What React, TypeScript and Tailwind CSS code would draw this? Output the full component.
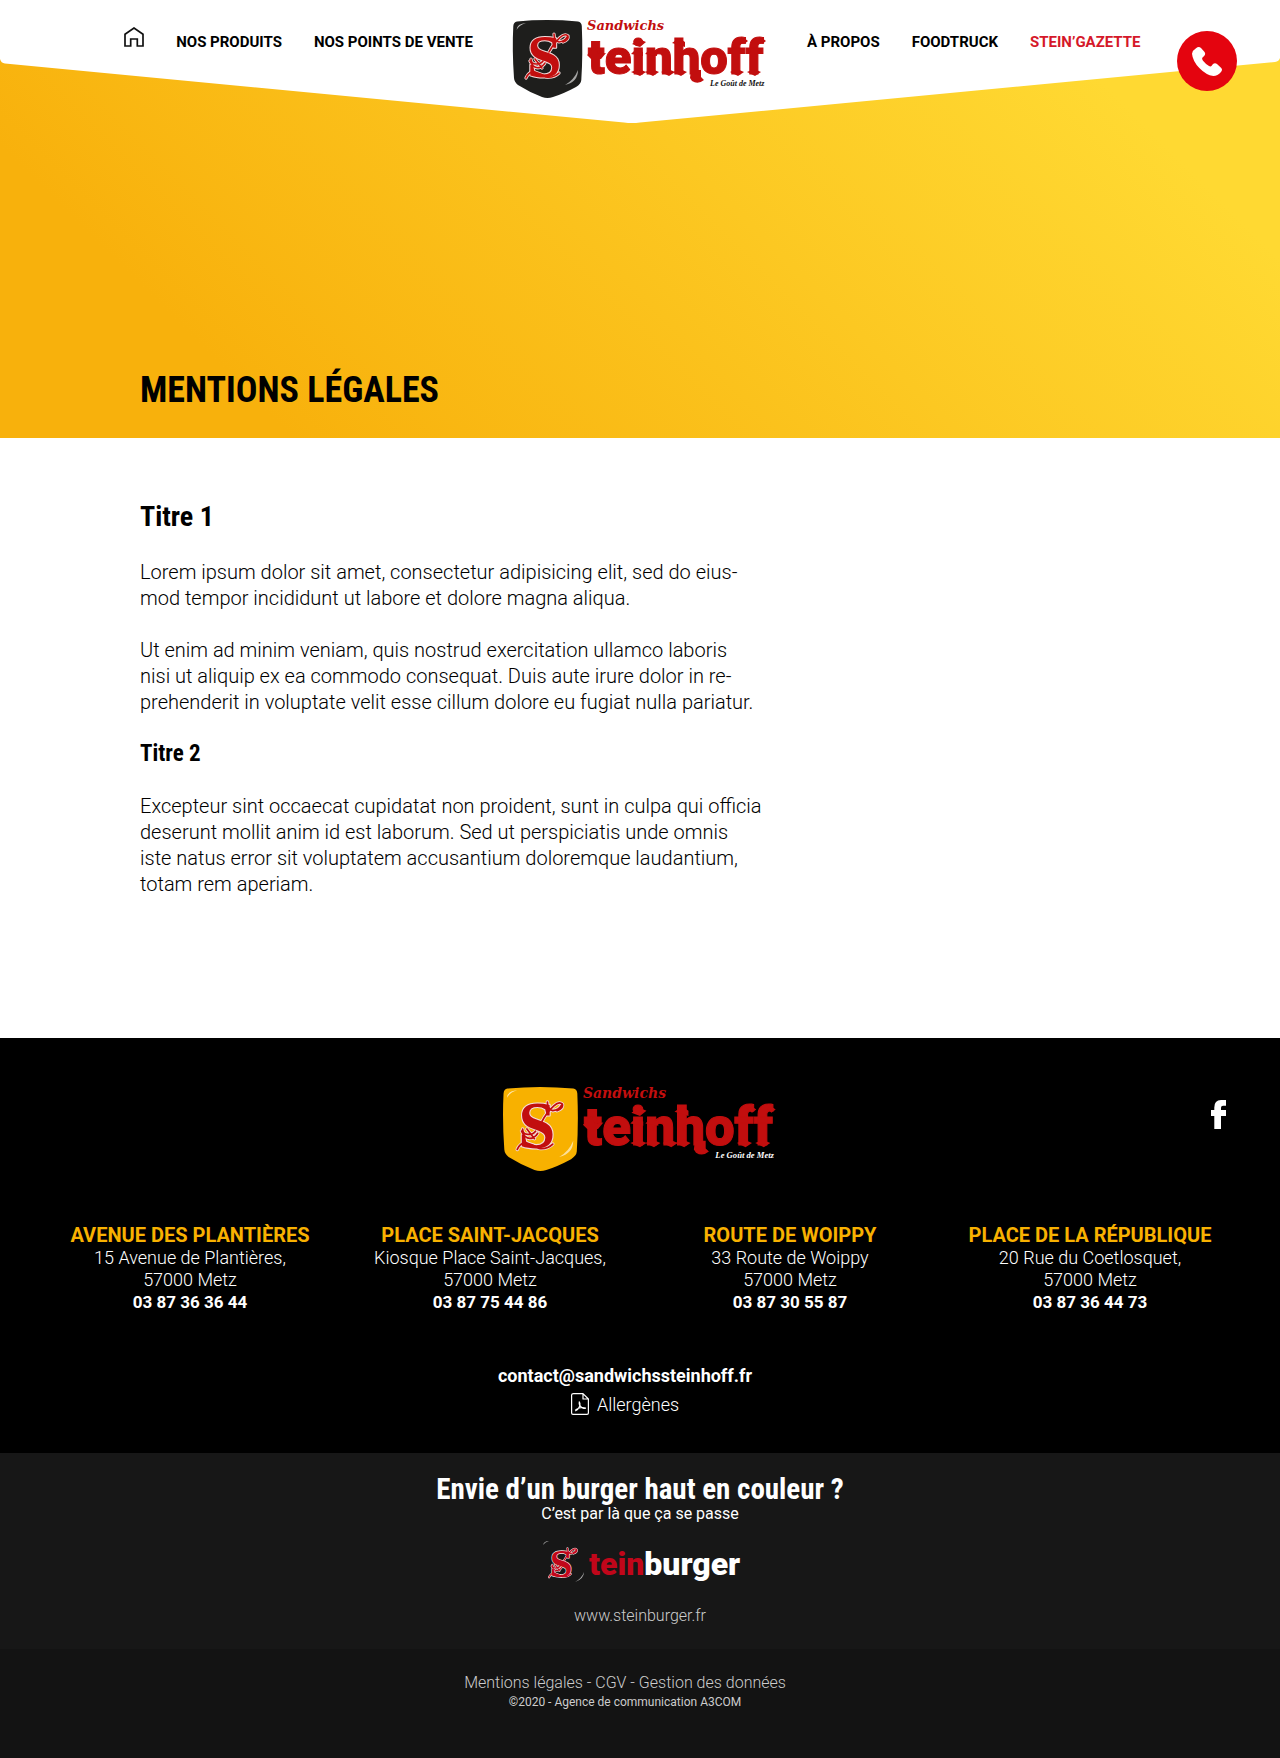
import type { ReactNode } from "react";

const shops = [
  { name: "AVENUE DES PLANTIÈRES", street: "15 Avenue de Plantières,", city: "57000 Metz", phone: "03 87 36 36 44" },
  { name: "PLACE SAINT-JACQUES", street: "Kiosque Place Saint-Jacques,", city: "57000 Metz", phone: "03 87 75 44 86" },
  { name: "ROUTE DE WOIPPY", street: "33 Route de Woippy", city: "57000 Metz", phone: "03 87 30 55 87" },
  { name: "PLACE DE LA RÉPUBLIQUE", street: "20 Rue du Coetlosquet,", city: "57000 Metz", phone: "03 87 36 44 73" },
];

/* Scrolls that surround the initial of the monogram. */
const scrolls =
  "M28 2Q28 9 33 10Q39 9 41 5M23 20Q27 12 34 5.500Q39 1 42 4Q43 8 37 10M5 27Q5 32 10 32Q15 32 17 29M4 29Q8 38 15 35Q18 33 19 31M9 27L16 36M0 46Q3 39 9 40Q16 42 20 45Q28 46 33 41";

/* Gothic monogram with its scrolls, on a 42x47 box. */
function Monogram({ red }: { red: string }) {
  return (
    <g strokeLinejoin="round" strokeLinecap="round">
      <path d={scrolls} fill="none" stroke="#f3dcdc" strokeWidth="3.200" />
      <text
        x="1"
        y="45"
        fontSize="62"
        fontWeight="700"
        fill={red}
        stroke="#f3dcdc"
        strokeWidth="2"
        paintOrder="stroke"
        className="font-['Liberation_Serif',serif]"
      >
        S
      </text>
      <path d={scrolls} fill="none" stroke={red} strokeWidth="1.600" />
    </g>
  );
}

/* Pointed blackletter terminals set over the wordmark's stems. */
const terminals =
  "M74 35l8-8 3 7 8-1-5 6H78ZM119 24l7-5 7 3-6 5ZM118 34l5-5 7 3v4ZM118 52l8-3 7 3-6 4ZM132 34l5-5 7 3v4ZM132 52l7-3 7 3-6 4ZM148 52l7-3 7 3-6 4ZM159 23l7-5 6 4v5ZM160 52l7-3 7 3-6 4ZM178 50H188V57L191 60Q185 65 179 61L177 58ZM217 52l7-3 7 3-6 4ZM234 52l7-3 7 3-6 4ZM226 20l5-2 4 3-4 3ZM245 20l4-2 4 3-4 3Z";

function SteinhoffLogo({ shield, motto, className }: { shield: string; motto: string; className: string }) {
  return (
    <svg viewBox="0 0 254 78" className={className} overflow="visible" role="img" aria-label="Sandwichs Steinhoff, Le Goût de Metz">
      <path
        fill={shield}
        d="M4 1.5 Q34 -1.4 65 1.5 Q68.500 2 68.800 6 Q70 34 68.300 60 Q68 64 63 67 Q50 74 40 77 Q34.500 79 29 77 Q16 72 5 65 Q1.300 62 1 58 Q-1 30 .3 6 Q.6 2 4 1.500Z"
      />
      <path fill="#fff" opacity=".7" d="M3.500 10 Q4 3.500 13 3 Q6 5 3.500 10Z" />
      <path fill="#fff" opacity=".6" d="M65 50 Q65 62 52 65 Q61 60 65 50Z" />
      <g transform="translate(13 12)">
        <Monogram red="#c20e0e" />
      </g>
      <g fill="#c20e0e">
        <text x="74" y="10" fontSize="13" fontWeight="700" fontStyle="italic" className="font-['DejaVu_Serif',serif]">
          Sandwichs
        </text>
        <text x="75" y="54" fontSize="49" fontWeight="900" stroke="#c20e0e" strokeWidth="1" className="font-['Roboto',sans-serif]">
          teinhoff
        </text>
        <path d={terminals} />
      </g>
      <text x="197" y="66" fontSize="8" fontWeight="700" fontStyle="italic" fill={motto} className="font-['Liberation_Serif',serif]">
        Le Goût de Metz
      </text>
    </svg>
  );
}

function SteinburgerLogo() {
  return (
    <svg viewBox="0 0 198 44" className="h-11 w-[198px]" overflow="visible" role="img" aria-label="Steinburger">
      <path fill="#aaa" d="M2 5 Q3 1 8 1 Q4 2 2 5Z" />
      <path fill="#aaa" d="M43 32 Q43 39 34 42 Q41 38 43 32Z" />
      <g transform="translate(8 7) scale(.66)">
        <Monogram red="#c1061a" />
      </g>
      <text x="48" y="35" fontSize="32" fontWeight="900" className="font-['Roboto',sans-serif]">
        <tspan fill="#c1061a">tein</tspan>
        <tspan fill="#fff">burger</tspan>
      </text>
    </svg>
  );
}

function NavLink({ children, red = false }: { children: ReactNode; red?: boolean }) {
  return (
    <a
      href="#"
      className={
        red
          ? "whitespace-nowrap text-[15px] leading-5 font-bold text-[#d5182a]"
          : "whitespace-nowrap text-[15px] leading-5 font-bold text-black"
      }
    >
      {children}
    </a>
  );
}

export default function App() {
  return (
    <div className="bg-white font-['Roboto',sans-serif] text-black">
      <div className="relative bg-[linear-gradient(45deg,#f8b10c_17%,#ffd932_85%)]">
        <svg viewBox="0 0 1280 124" preserveAspectRatio="none" className="absolute inset-x-0 top-0 h-[124px] w-full" aria-hidden="true">
          <path fill="#fff" d="M0 0H1280V58Q1279 61.500 1275 62L640 122.500Q632 123.500 624 122.500L5 63.500Q1 63 0 59Z" />
        </svg>
        <header className="relative grid grid-cols-[1fr_auto_1fr] items-start pt-5">
          <nav aria-label="Produits" className="flex justify-end gap-8 pt-3 pr-10">
            <a href="#" aria-label="Accueil" className="-mt-[5px]">
              <svg viewBox="0 0 20 20" className="size-5" fill="none" stroke="#111" strokeWidth="1.700">
                <path d="M1 7.200 10 1l9 6.200V19h-5.700v-7H6.700v7H1Z" />
              </svg>
            </a>
            <NavLink>NOS PRODUITS</NavLink>
            <NavLink>NOS POINTS DE VENTE</NavLink>
          </nav>
          <a href="#">
            <SteinhoffLogo shield="#1e1e1c" motto="#111" className="h-[78px] w-[254px]" />
          </a>
          <nav aria-label="Entreprise" className="flex gap-8 pt-3 pl-10">
            <NavLink>À PROPOS</NavLink>
            <NavLink>FOODTRUCK</NavLink>
            <NavLink red>STEIN’GAZETTE</NavLink>
          </nav>
          <a
            href="#"
            aria-label="Téléphone"
            className="absolute top-[31px] right-[43px] flex size-15 items-center justify-center rounded-full bg-[#e4040f]"
          >
            <svg viewBox="0 0 90 87" className="h-[29px] w-[30px]" fill="#fff">
              <path d="M12 4Q20-3 27 3L37 14Q42 20 37 26L31 32Q29 36 33 41Q42 52 51 57Q56 60 59 56L63 51Q69 46 75 51L87 62Q93 68 87 75Q77 87 64 87Q42 84 22 63Q2 42 0 20Q1 11 12 4Z" />
            </svg>
          </a>
        </header>
        <h1 className="pt-[267px] pb-[22px] pl-[140px] font-['Roboto_Condensed',sans-serif] text-4xl leading-[51px] font-bold">
          MENTIONS LÉGALES
        </h1>
      </div>

      <main className="px-[140px] pt-[63px] pb-[141px] text-xl leading-[26px] font-light">
        <h2 className="pb-[26px] font-['Roboto_Condensed',sans-serif] text-[28px] leading-8 font-bold">Titre 1</h2>
        <p>
          Lorem ipsum dolor sit amet, consectetur adipisicing elit, sed do eius-
          <br />
          mod tempor incididunt ut labore et dolore magna aliqua.
        </p>
        <p className="pt-[26px]">
          Ut enim ad minim veniam, quis nostrud exercitation ullamco laboris
          <br />
          nisi ut aliquip ex ea commodo consequat. Duis aute irure dolor in re-
          <br />
          prehenderit in voluptate velit esse cillum dolore eu fugiat nulla pariatur.
        </p>
        <h3 className="py-[26px] font-['Roboto_Condensed',sans-serif] text-[23px] leading-[26px] font-bold">Titre 2</h3>
        <p>
          Excepteur sint occaecat cupidatat non proident, sunt in culpa qui officia
          <br />
          deserunt mollit anim id est laborum. Sed ut perspiciatis unde omnis
          <br />
          iste natus error sit voluptatem accusantium doloremque laudantium,
          <br />
          totam rem aperiam.
        </p>
      </main>

      <footer className="text-center text-white">
        <div className="relative bg-black pt-[49px] pb-9">
          <a href="#" className="mx-auto block w-[274px]">
            <SteinhoffLogo shield="#f8b100" motto="#fff" className="h-[84px] w-[274px]" />
          </a>
          <a href="#" aria-label="Facebook" className="absolute top-[62px] right-[54px]">
            <svg viewBox="0 0 15 29" className="h-[29px] w-[15px]" fill="#fff">
              <path d="M3.300 29V16H0v-6h3.300V7.500Q3.300.300 10 .100L15 0v5.700h-3Q10 5.700 10 7.700V10h5v6h-5v13Z" />
            </svg>
          </a>
          <div className="grid grid-cols-4 px-10 pt-[52px]">
            {shops.map((shop) => (
              <address key={shop.name} className="text-lg leading-[22px] font-light not-italic">
                <h4 className="text-xl leading-6 font-bold whitespace-nowrap text-[#f8b100]">{shop.name}</h4>
                <p>{shop.street}</p>
                <p>{shop.city}</p>
                <a href="#" className="text-[17px] font-bold">{shop.phone}</a>
              </address>
            ))}
          </div>
          <div className="flex flex-col items-center gap-[5px] pt-[51px] pr-[30px] text-lg leading-6">
            <a href="#" className="font-bold">contact@sandwichssteinhoff.fr</a>
            <a href="#" className="flex items-start gap-2 font-light">
              <svg viewBox="0 0 18 22" className="h-[22px] w-[18px]" fill="none" stroke="#fff" strokeWidth="1.200" strokeLinejoin="round">
                <path d="M2.600.6H12L17.400 6v14q0 1.400-1.400 1.400H2Q.6 21.400.6 20V2Q.6.6 2.600.6ZM12 .6V6h5.400" />
                <path d="M8.300 8.500q1.500 2.500 0 5.500-1.800 3.500-4 4M8.300 8.500Q7.500 13 12 15.200q2.200.6 2.500-.2-2.500-1-6.300 0-3 1-4 2.400" />
              </svg>
              Allergènes
            </a>
          </div>
        </div>

        <div className="bg-[#171717] pt-5 pb-[21px]">
          <h2 className="font-['Roboto_Condensed',sans-serif] text-[29px] leading-8 font-bold">
            Envie d’un burger haut en couleur ?
          </h2>
          <p className="pt-px text-base leading-4">C’est par là que ça se passe</p>
          <a href="#" className="mx-auto mt-[18px] block w-[198px]">
            <SteinburgerLogo />
          </a>
          <a href="#" className="mt-5 inline-block text-base leading-6 font-light text-[#ccc]">www.steinburger.fr</a>
        </div>

        <div className="bg-[#131313] pt-6 pr-[30px] pb-12 text-[#ccc]">
          <p className="text-base leading-5 font-light">
            <a href="#">Mentions légales</a> - <a href="#">CGV</a> - <a href="#">Gestion des données</a>
          </p>
          <p className="text-xs leading-[18px]">©2020 - Agence de communication A3COM</p>
        </div>
      </footer>
    </div>
  );
}
